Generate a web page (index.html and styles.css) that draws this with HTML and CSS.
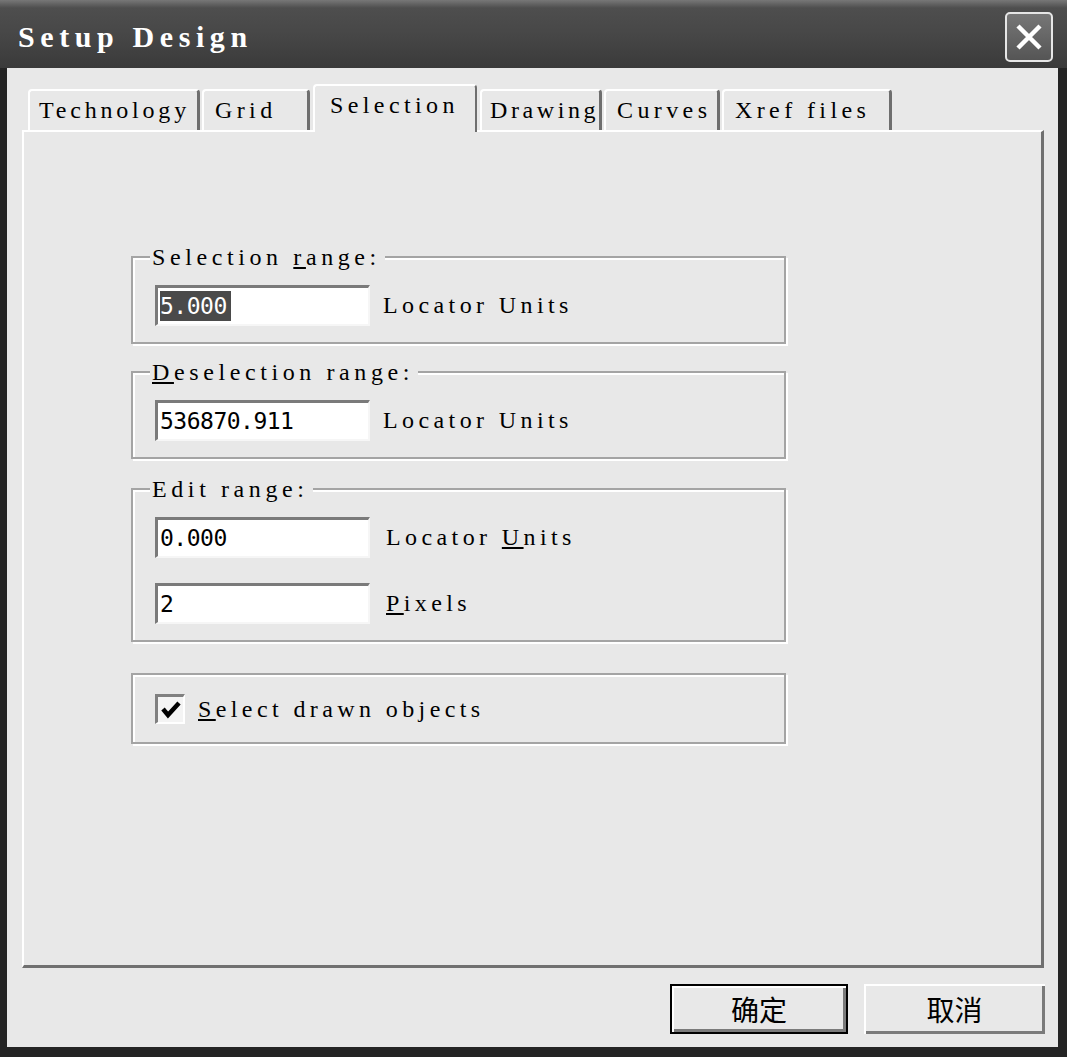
FILE: index.html
```html
<!DOCTYPE html>
<html lang="en">
<head>
    <meta charset="UTF-8">
    <meta name="viewport" content="width=device-width, initial-scale=1.0">
    <title>Setup Design</title>
    <link rel="stylesheet" href="styles.css">
</head>
<body>
<div class="window">
    <!-- Title bar -->
    <div class="titlebar">
        <span class="title">Setup Design</span>
        <button class="close" type="button" aria-label="Close">
            <svg width="30" height="30" viewBox="0 0 30 30">
                <path d="M4 4 L26 26 M26 4 L4 26" stroke="#fff" stroke-width="4.5" fill="none"/>
            </svg>
        </button>
    </div>

    <div class="client">
        <!-- Tabs -->
        <div class="tabs">
            <div class="tab tab-tech">Technology</div>
            <div class="tab tab-grid">Grid</div>
            <div class="tab tab-active">Selection</div>
            <div class="tab tab-drawing">Drawing</div>
            <div class="tab tab-curves">Curves</div>
            <div class="tab tab-xref">Xref files</div>
        </div>

        <div class="panel">
            <!-- Selection range -->
            <fieldset class="group">
                <legend>Selection <u>r</u>ange:</legend>
                <div class="group-body">
                    <div class="row">
                        <div class="field"><span class="selected">5.000</span></div>
                        <span class="unit">Locator Units</span>
                    </div>
                </div>
            </fieldset>

            <!-- Deselection range -->
            <fieldset class="group group-second">
                <legend><u>D</u>eselection range:</legend>
                <div class="group-body">
                    <div class="row">
                        <div class="field">536870.911</div>
                        <span class="unit">Locator Units</span>
                    </div>
                </div>
            </fieldset>

            <!-- Edit range -->
            <fieldset class="group group-third">
                <legend>Edit range:</legend>
                <div class="group-body">
                    <div class="row">
                        <div class="field">0.000</div>
                        <span class="unit unit-wide">Locator <u>U</u>nits</span>
                    </div>
                    <div class="row">
                        <div class="field">2</div>
                        <span class="unit unit-wide"><u>P</u>ixels</span>
                    </div>
                </div>
            </fieldset>

            <!-- Select drawn objects -->
            <div class="group group-check">
                <div class="row">
                    <span class="checkbox">
                        <svg width="22" height="22" viewBox="0 0 22 22">
                            <path d="M3 10 L8 16 L19 4" stroke="#000" stroke-width="4.5" fill="none"/>
                        </svg>
                    </span>
                    <span class="unit"><u>S</u>elect drawn objects</span>
                </div>
            </div>
        </div>

        <!-- Dialog buttons -->
        <div class="buttons">
            <button class="btn btn-default" type="button">确定</button>
            <button class="btn btn-cancel" type="button">取消</button>
        </div>
    </div>
</div>
</body>
</html>
```

FILE: styles.css
```css
body {
    margin: 0;
    background: #262626;
    font-family: "Liberation Serif", "DejaVu Serif", serif;
    color: #000;
}
.window {
    width: 1067px;
    height: 1057px;
    display: flex;
    flex-direction: column;
    background: #242424;
}
.titlebar {
    height: 68px;
    flex: none;
    box-sizing: border-box;
    padding: 6px 14px 0 18px;
    display: flex;
    align-items: center;
    justify-content: space-between;
    background: linear-gradient(#777 0, #4e4e4e 8px, #474747 50%, #3a3a3a 100%);
}
.title {
    color: #fff;
    font-weight: bold;
    font-size: 30px;
    letter-spacing: 5.6px;
}
.close {
    width: 48px;
    height: 50px;
    padding: 0;
    border: 2px solid #e6e6e6;
    border-radius: 5px;
    background: linear-gradient(#777, #555);
    display: flex;
    align-items: center;
    justify-content: center;
}
.client {
    flex: 1;
    margin: 0 9px 10px 7px;
    padding: 16px 14px 13px 15px;
    background: #e8e8e8;
    display: flex;
    flex-direction: column;
}

/* tabs */
.tabs {
    height: 46px;
    flex: none;
    display: flex;
    align-items: flex-end;
    padding-left: 6px;
}
.tab {
    height: 41px;
    box-sizing: border-box;
    margin-right: 2px;
    padding-left: 11px;
    border-top: 2px solid #fff;
    border-left: 2px solid #fff;
    border-right: 3px solid #6e6e6e;
    border-radius: 4px 4px 0 0;
    display: flex;
    align-items: center;
    font-size: 24px;
    letter-spacing: 4.4px;
    white-space: nowrap;
}
.tab-tech { width: 172px; padding-left: 9px; letter-spacing: 3.8px; }
.tab-grid { width: 108px; }
.tab-drawing { width: 122px; padding-left: 8px; letter-spacing: 3.6px; }
.tab-curves { width: 116px; }
.tab-xref { width: 170px; }
.tab-active {
    position: relative;
    z-index: 2;
    width: 164px;
    height: 48px;
    margin: 0 3px -2px 1px;
    padding-left: 15px;
    padding-bottom: 8px;
    background: #e8e8e8;
    border-right-width: 2px;
}

/* panel */
.panel {
    flex: 1;
    border: 2px solid;
    border-color: #fff #707070 #707070 #fff;
    border-width: 2px 3px 3px 2px;
    padding: 113px 0 0 107px;
}
.group {
    width: 655px;
    box-sizing: border-box;
    margin: 0;
    padding: 0;
    border: 2px solid #a4a4a4;
    box-shadow: 2px 2px 0 #fff, inset 2px 2px 0 #fff;
}
.group legend {
    margin-left: 17px;
    padding: 0 4px 0 2px;
    font-size: 24px;
    line-height: 24px;
    letter-spacing: 4.6px;
    background: #e8e8e8;
}
.group-second { margin-top: 16px; }
.group-third { margin-top: 18px; }
.group-body {
    padding: 16px 0 16px 22px;
    display: flex;
    flex-direction: column;
    gap: 25px;
}
.row {
    display: flex;
    align-items: center;
    gap: 13px;
}
.field {
    width: 215px;
    height: 41px;
    box-sizing: border-box;
    padding-left: 2px;
    border-top: 3px solid #7a7a7a;
    border-left: 3px solid #7a7a7a;
    border-right: 2px solid #f6f6f6;
    border-bottom: 2px solid #f6f6f6;
    background: #fff;
    font-family: "DejaVu Sans Mono", monospace;
    font-size: 23px;
    line-height: 36px;
    letter-spacing: -0.5px;
}
.selected {
    display: inline-block;
    line-height: 30px;
    padding-right: 4px;
    background: #4a4a4a;
    color: #fff;
}
.unit {
    font-size: 24px;
    letter-spacing: 4.4px;
    white-space: nowrap;
}
.unit-wide { margin-left: 3px; }
.group-check {
    margin-top: 31px;
    padding: 19px 0 18px 22px;
}
.checkbox {
    width: 30px;
    height: 30px;
    box-sizing: border-box;
    border-top: 3px solid #808080;
    border-left: 3px solid #808080;
    border-right: 2px solid #fff;
    border-bottom: 2px solid #fff;
    background: #f4f4f4;
    display: flex;
    align-items: center;
    justify-content: center;
}

/* buttons */
.buttons {
    flex: none;
    display: flex;
    justify-content: flex-end;
    gap: 16px;
    margin-top: 16px;
    margin-right: -1px;
}
.btn {
    height: 50px;
    padding: 0;
    background: #e8e8e8;
    font-family: "Noto Sans CJK SC", sans-serif;
    font-size: 28px;
    color: #000;
}
.btn-default {
    width: 178px;
    border: 2px solid #000;
    box-shadow: inset 2px 2px 0 #fff, inset -3px -3px 0 #7a7a7a;
}
.btn-cancel {
    width: 181px;
    border: none;
    box-shadow: inset 2px 2px 0 #fff, inset -3px -3px 0 #7a7a7a;
}
```
